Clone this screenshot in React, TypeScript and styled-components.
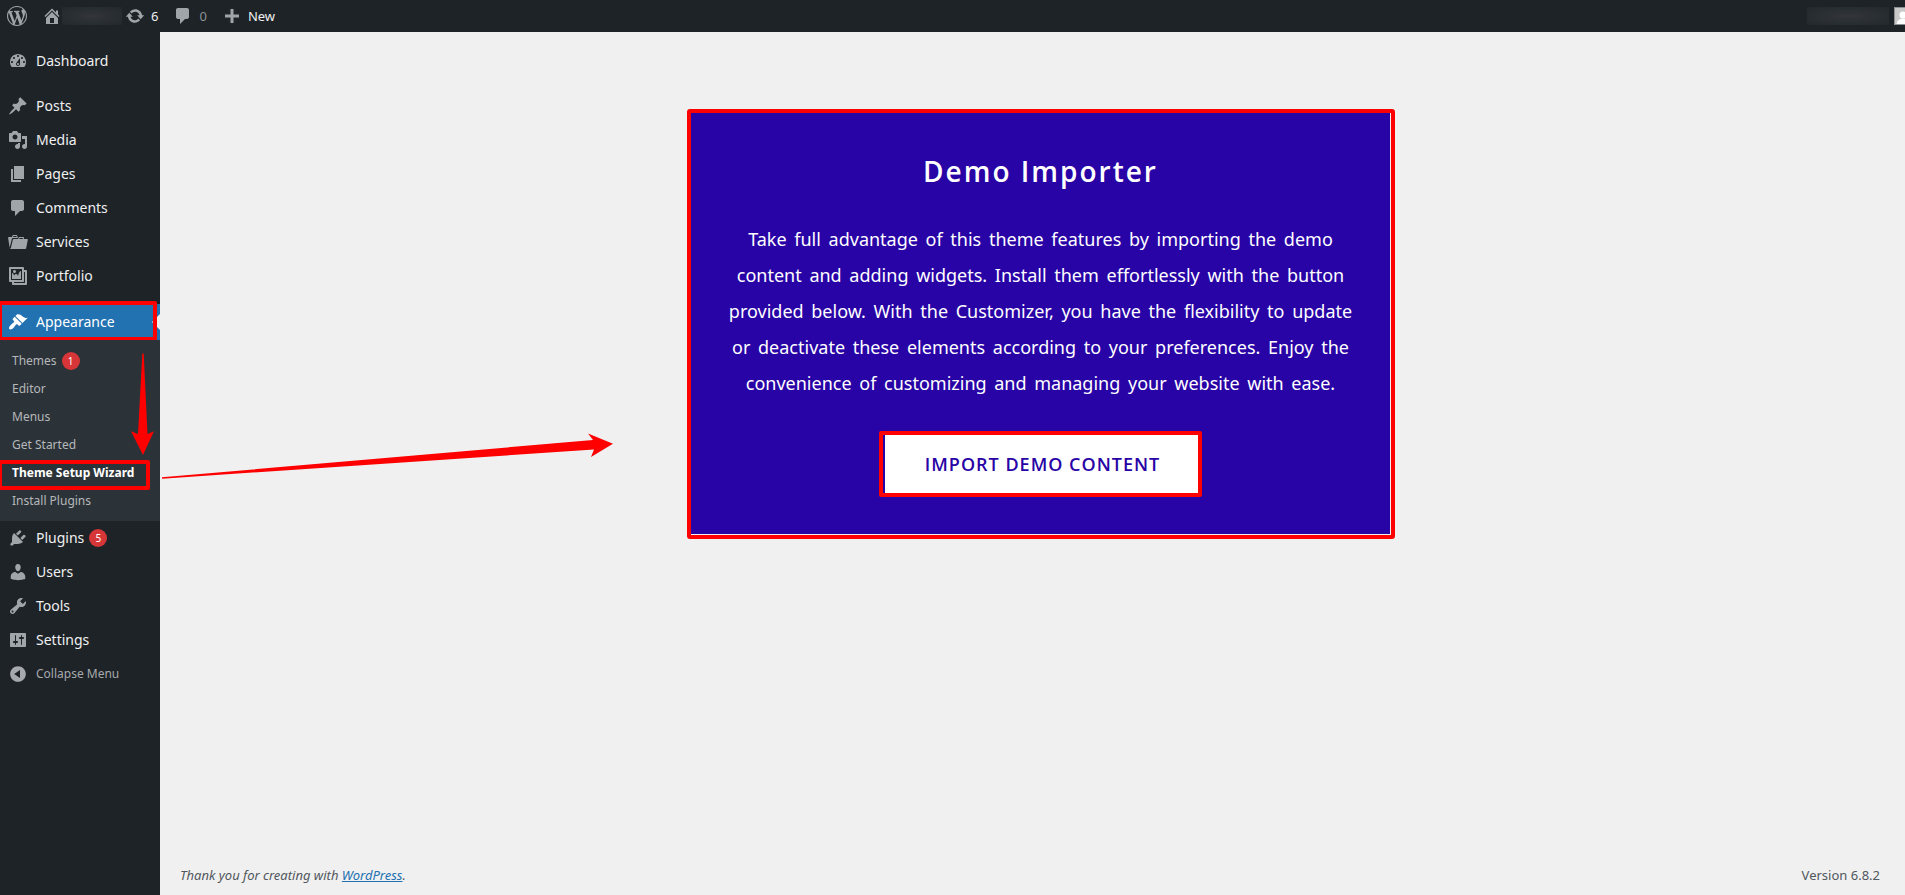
import React from "react";
import styled, { createGlobalStyle, css } from "styled-components";

const red = "#ff0000";
const canvas = "#f0f0f0";

const GlobalStyle = createGlobalStyle`
  * { box-sizing: border-box; }
  body {
    margin: 0;
    background: ${canvas};
    color: #50575e;
    font-family: "Noto Sans", sans-serif;
    font-size: 13px;
    line-height: 18px;
  }
  a { color: inherit; text-decoration: none; }
  button { font: inherit; }
  ul { list-style: none; margin: 0; padding: 0; }
`;

const Page = styled.div`
  min-height: 100vh;
  display: flex;
  flex-direction: column;
`;

const AdminBar = styled.header`
  height: 32px;
  display: flex;
  align-items: center;
  justify-content: space-between;
  background: #1d2327;
  color: #f0f0f1;
  overflow: hidden;
`;

const BarGroup = styled.nav`
  display: flex;
  align-items: center;
  gap: 15px;
  padding-left: 7px;
`;

const BarLink = styled.a<{ $dim?: boolean }>`
  display: flex;
  align-items: center;
  gap: 6px;
  color: ${(p) => (p.$dim ? "#8c9196" : "#f0f0f1")};
`;

const Redacted = styled.span<{ $width: number }>`
  width: ${(p) => p.$width}px;
  height: 18px;
  background: radial-gradient(ellipse at center, #323539 0%, #2a2f33 50%, #22282c 100%);
`;

const SiteLink = styled(BarLink)`
  gap: 0;
  margin-right: -12px;
`;

const Account = styled.a`
  display: flex;
  align-items: center;
  gap: 5px;
  margin-right: -7px;
`;

const Avatar = styled.svg`
  width: 18px;
  height: 18px;
  border: 1px solid #8c8f94;
  background: #c9c9c9;
`;

const Body = styled.div`
  flex: 1;
  display: flex;
`;

const Sidebar = styled.nav`
  width: 160px;
  flex: none;
  padding-top: 12px;
  background: #1d2327;
  color: #f0f0f1;
`;

const MenuItem = styled.li<{ $spaced?: boolean }>`
  position: relative;
  margin-top: ${(p) => (p.$spaced ? 11 : 0)}px;
`;

const highlight = css`
  content: "";
  position: absolute;
  left: -2px;
  border: 4px solid ${red};
  border-radius: 2px;
  pointer-events: none;
`;

const MenuLink = styled.a<{ $current?: boolean }>`
  position: relative;
  display: flex;
  align-items: center;
  gap: 8px;
  height: ${(p) => (p.$current ? 36 : 34)}px;
  padding-left: 8px;
  font-size: 14px;
  color: ${(p) => (p.$current ? "#fff" : "#f0f0f1")};
  background: ${(p) => (p.$current ? "#2271b1" : "transparent")};

  ${(p) =>
    p.$current &&
    css`
      &::before {
        content: "";
        position: absolute;
        right: 0;
        top: 10px;
        border: 8px solid transparent;
        border-right-color: ${canvas};
      }
      &::after {
        ${highlight}
        top: -3px;
        right: 3px;
        bottom: -1px;
      }
    `}
`;

const Collapse = styled.button`
  display: flex;
  align-items: center;
  gap: 8px;
  width: 100%;
  height: 34px;
  padding: 0 0 0 8px;
  border: 0;
  background: none;
  color: #a7aaad;
  font-size: 12px;
`;

const Submenu = styled.ul`
  position: relative;
  padding: 7px 0 6px;
  background: #2c3338;
`;

const SubLink = styled.a<{ $current?: boolean }>`
  position: relative;
  display: flex;
  align-items: center;
  height: 28px;
  padding-left: 12px;
  font-size: 12px;
  color: ${(p) => (p.$current ? "#fff" : "#b5b8bb")};
  font-weight: ${(p) => (p.$current ? 700 : 400)};

  ${(p) =>
    p.$current &&
    css`
      &::after {
        ${highlight}
        top: 1px;
        right: 10px;
        bottom: -3px;
      }
    `}
`;

const Badge = styled.span`
  width: 18px;
  height: 18px;
  margin-left: 5px;
  border-radius: 9px;
  background: #d63638;
  color: #fff;
  font-size: 10px;
  text-align: center;
`;

const Label = styled.span`
  display: flex;
  align-items: center;
`;

const DownArrow = styled.svg`
  position: absolute;
  left: 130px;
  top: 13px;
  width: 26px;
  height: 102px;
`;

const RightArrow = styled.svg`
  position: absolute;
  left: 162px;
  top: 92px;
  width: 451px;
  height: 48px;
`;

const Content = styled.div`
  flex: 1;
  display: flex;
  flex-direction: column;
  justify-content: space-between;
  padding-right: 5px;
`;

const Main = styled.main`
  display: flex;
  justify-content: center;
  padding: 77px 0 0 22px;
`;

const CardFrame = styled.section`
  width: 708px;
  max-width: 100%;
  padding: 0 1px 1px 0;
  border: 4px solid ${red};
  border-radius: 3px;
`;

const Card = styled.div`
  display: flex;
  flex-direction: column;
  align-items: center;
  padding: 38px 30px 37px;
  background: #2803a6;
  color: #fff;
  text-align: center;
`;

const Title = styled.h1`
  margin: 0;
  font-family: "Open Sans", "Noto Sans", sans-serif;
  font-size: 28px;
  font-weight: 600;
  line-height: 40px;
  letter-spacing: 2px;
`;

const Lead = styled.p`
  margin: 30px 0;
  font-size: 18px;
  line-height: 36px;
  word-spacing: 3px;
`;

const ButtonFrame = styled.div`
  padding-left: 2px;
  border: 4px solid ${red};
  border-radius: 2px;
`;

const ImportButton = styled.button`
  display: block;
  height: 58px;
  padding: 0 38px 0 40px;
  border: 0;
  background: #fff;
  color: #2803a6;
  font-family: "Open Sans", "Noto Sans", sans-serif;
  font-size: 18px;
  font-weight: 600;
  letter-spacing: 1px;
  text-transform: uppercase;
`;

const Footer = styled.footer`
  display: flex;
  justify-content: space-between;
  padding: 11px 20px;
  font-size: 13px;
`;

const FooterLink = styled.a`
  color: #2271b1;
  text-decoration: underline;
`;

const IconSvg = styled.svg<{ $color?: string }>`
  flex: none;
  width: 20px;
  height: 20px;
  fill: ${(p) => p.$color ?? "#a0a5aa"};
`;

const icons = {
  wordpress:
    "M20 10c0-5.51-4.49-10-10-10C4.48 0 0 4.49 0 10c0 5.52 4.48 10 10 10 5.51 0 10-4.48 10-10zM7.78 15.37L4.37 6.22c.55-.02 1.17-.08 1.17-.08.5-.06.44-1.13-.06-1.11 0 0-1.45.11-2.37.11-.18 0-.37 0-.58-.01C4.12 2.69 6.87 1.11 10 1.11c2.33 0 4.45.87 6.05 2.34-.68-.11-1.65.39-1.65 1.58 0 .74.45 1.36.9 2.1.35.61.55 1.36.55 2.46 0 1.49-1.4 5-1.4 5l-3.03-8.37c.54-.02.82-.17.82-.17.5-.05.44-1.25-.06-1.22 0 0-1.44.12-2.38.12-.87 0-2.33-.12-2.33-.12-.5-.03-.56 1.2-.06 1.22l.92.08 1.26 3.41zM17.41 10c.24-.64.74-1.87.43-4.25.7 1.29 1.05 2.71 1.05 4.25 0 3.29-1.73 6.24-4.4 7.78.97-2.59 1.94-5.2 2.92-7.78zM6.1 18.09C3.12 16.65 1.11 13.53 1.11 10c0-1.3.23-2.48.72-3.59C3.25 10.3 4.67 14.2 6.1 18.09zm4.03-6.63l2.58 6.98c-.86.29-1.76.45-2.71.45-.79 0-1.57-.11-2.29-.33.81-2.38 1.62-4.74 2.42-7.1z",
  home: "M16 8.5l1.53 1.53-1.06 1.06L10 4.6l-6.47 6.47-1.06-1.06L10 2.5l4 4v-2h2v4zm-6-2.46l6 5.99V18H4v-5.97zM12 17v-5H8v5h4z",
  update:
    "M10.2 3.28c3.53 0 6.43 2.61 6.92 6h2.08l-3.5 4-3.5-4h2.32c-.45-1.97-2.21-3.45-4.32-3.45-1.45 0-2.73.71-3.54 1.78L4.95 5.66C6.23 4.2 8.11 3.28 10.2 3.28zm-.4 13.44c-3.52 0-6.43-2.61-6.92-6H.8l3.5-4c1.17 1.33 2.33 2.67 3.5 4H5.48c.45 1.97 2.21 3.45 4.32 3.45 1.45 0 2.73-.71 3.54-1.78l1.71 1.95c-1.28 1.46-3.15 2.38-5.25 2.38z",
  plus: "M17 8.5v3h-5.5v5.5h-3v-5.5H3v-3h5.5V3h3v5.5H17z",
  dashboard:
    "M3.76 16h12.48c1.1-1.37 1.76-3.11 1.76-5 0-4.42-3.58-8-8-8s-8 3.58-8 8c0 1.89.66 3.63 1.76 5zM10 4c.55 0 1 .45 1 1s-.45 1-1 1-1-.45-1-1 .45-1 1-1zM6 6c.55 0 1 .45 1 1s-.45 1-1 1-1-.45-1-1 .45-1 1-1zm8 0c.55 0 1 .45 1 1s-.45 1-1 1-1-.45-1-1 .45-1 1-1zm-5.37 5.55L12 7v6c0 1.1-.9 2-2 2s-2-.9-2-2c0-.57.24-1.08.63-1.45zM4 10c.55 0 1 .45 1 1s-.45 1-1 1-1-.45-1-1 .45-1 1-1zm12 0c.55 0 1 .45 1 1s-.45 1-1 1-1-.45-1-1 .45-1 1-1zm-5 3c0-.55-.45-1-1-1s-1 .45-1 1 .45 1 1 1 1-.45 1-1z",
  post: "M10.44 3.02l1.82-1.82 6.36 6.35-1.83 1.82c-1.05-.68-2.48-.57-3.41.36l-.75.75c-.92.93-1.04 2.35-.35 3.41l-1.83 1.82-2.41-2.41-2.8 2.79c-.42.42-3.38 2.71-3.8 2.29s1.86-3.39 2.28-3.81l2.79-2.79L4.1 9.36l1.83-1.82c1.05.69 2.48.57 3.4-.36l.75-.75c.93-.92 1.05-2.35.36-3.41z",
  media:
    "M13 11V4c0-.55-.45-1-1-1h-1.67L9 1H5L3.67 3H2c-.55 0-1 .45-1 1v7c0 .55.45 1 1 1h10c.55 0 1-.45 1-1zM7 4.5c1.38 0 2.5 1.12 2.5 2.5S8.38 9.5 7 9.5 4.5 8.38 4.5 7 5.62 4.5 7 4.5zM14 6h5v10.5c0 1.38-1.12 2.5-2.5 2.5S14 17.88 14 16.5s1.12-2.5 2.5-2.5c.17 0 .34.02.5.05V9h-3V6zm-4 8.05V13h2v3.5c0 1.38-1.12 2.5-2.5 2.5S7 17.88 7 16.5 8.12 14 9.5 14c.17 0 .34.02.5.05z",
  page: "M6 15V2h10v13H6zm-1 1h8v2H3V5h2v11z",
  comments:
    "M5 2h9c1.1 0 2 .9 2 2v7c0 1.1-.9 2-2 2h-2l-5 5v-5H5c-1.1 0-2-.9-2-2V4c0-1.1.9-2 2-2z",
  folder:
    "M4 5H.78c-.37 0-.74.32-.69.84l1.56 9.99S3.5 8.47 3.86 6.7c.11-.53.61-.7.98-.7H10s-.7-2.08-.77-2.31C9.11 3.25 8.89 3 8.45 3H5.14c-.36 0-.7.23-.8.64C4.25 4.04 4 5 4 5zm4.88 0h-4s.42-1 .87-1h2.13c.48 0 1 1 1 1zM2.67 16.25c-.31.47-.76.75-1.26.75h15.73c.54 0 .92-.31 1.03-.83.44-2.19 1.68-8.44 1.68-8.44.07-.5-.3-.73-.62-.73H16V5.53c0-.16-.26-.53-.66-.53h-3.76c-.52 0-.87.58-.87.58L10 7H5.59c-.32 0-.63.19-.69.5 0 0-1.59 6.7-1.72 7.33-.07.37-.22.99-.51 1.42zM15.38 7H11s.58-1 1.13-1h2.29c.71 0 .96 1 .96 1z",
  gallery:
    "M16 4h1.96c.57 0 1.04.47 1.04 1.04v12.92c0 .57-.47 1.04-1.04 1.04H5.04C4.47 19 4 18.53 4 17.96V16H2.04C1.47 16 1 15.53 1 14.96V2.04C1 1.47 1.47 1 2.04 1h12.92c.57 0 1.04.47 1.04 1.04V4zM3 14h11V3H3v11zm5-8.5C8 4.67 7.33 4 6.5 4S5 4.67 5 5.5 5.67 7 6.5 7 8 6.33 8 5.5zm2 4.5s1-5 3-5v8H4V7c2 0 2 3 2 3s.33-2 2-2 2 2 2 2zm7 7V6h-1v8.96c0 .57-.47 1.04-1.04 1.04H6v1h11z",
  appearance:
    "M14.48 11.06L7.41 3.99l1.5-1.5c.5-.56 2.3-.47 3.51.32 1.21.8 1.43 1.28 2.91 2.1 1.18.64 2.45 1.26 4.45.85zm-.71.71L6.7 4.7 4.93 6.47c-.39.39-.39 1.02 0 1.41l1.06 1.06c.39.39.39 1.03 0 1.42-.6.6-1.43 1.11-2.21 1.69-.35.26-.7.53-1.01.84C1.43 14.23.4 16.08 1.4 17.07c.99 1 2.84-.03 4.18-1.36.31-.31.58-.66.85-1.02.57-.78 1.08-1.61 1.69-2.21.39-.39 1.02-.39 1.41 0l1.06 1.06c.39.39 1.02.39 1.41 0z",
  plugins:
    "M13.11 4.36L9.87 7.6 8 5.73l3.24-3.24c.35-.34 1.05-.2 1.56.32.52.51.66 1.21.31 1.55zm-8 1.77l.91-1.12 9.01 9.01-1.19.84c-.71.71-2.63 1.16-3.82 1.16H6.14L4.9 17.26c-.59.59-1.54.59-2.12 0-.59-.58-.59-1.53 0-2.12l1.24-1.24v-3.88c0-1.13.4-3.19 1.09-3.89zm7.26 3.97l3.24-3.24c.34-.35 1.04-.21 1.55.31.52.51.66 1.21.31 1.55l-3.24 3.25z",
  users:
    "M10 9.25c-2.27 0-2.73-3.44-2.73-3.44C7 4.02 7.82 2 9.97 2c2.16 0 2.98 2.02 2.71 3.81 0 0-.41 3.44-2.68 3.44zm0 2.57L12.72 10c2.39 0 4.52 2.33 4.52 4.53v2.49s-3.65 1.13-7.24 1.13c-3.65 0-7.24-1.13-7.24-1.13v-2.49c0-2.25 1.94-4.48 4.47-4.48z",
  tools:
    "M16.68 9.77c-1.34 1.34-3.3 1.67-4.95.99l-5.41 6.52c-.99.99-2.59.99-3.58 0s-.99-2.59 0-3.57l6.52-5.42c-.68-1.65-.35-3.61.99-4.95 1.28-1.28 3.12-1.62 4.72-1.06l-2.89 2.89 2.82 2.82 2.86-2.87c.53 1.58.18 3.39-1.08 4.65zM3.81 16.21c.4.39 1.04.39 1.43 0 .4-.4.4-1.04 0-1.43-.39-.4-1.03-.4-1.43 0-.39.39-.39 1.03 0 1.43z",
  settings:
    "M18 16V4c0-.55-.45-1-1-1H3c-.55 0-1 .45-1 1v12c0 .55.45 1 1 1h14c.55 0 1-.45 1-1zM8 11h1c.55 0 1 .45 1 1s-.45 1-1 1H8v1.5c0 .28-.22.5-.5.5s-.5-.22-.5-.5V13H6c-.55 0-1-.45-1-1s.45-1 1-1h1V5.5c0-.28.22-.5.5-.5s.5.22.5.5V11zm5-2h-1c-.55 0-1-.45-1-1s.45-1 1-1h1V5.5c0-.28.22-.5.5-.5s.5.22.5.5V7h1c.55 0 1 .45 1 1s-.45 1-1 1h-1v5.5c0 .28-.22.5-.5.5s-.5-.22-.5-.5V9z",
  collapse:
    "M10 2.16c4.33 0 7.84 3.51 7.84 7.84s-3.51 7.84-7.84 7.84S2.16 14.33 2.16 10 5.71 2.16 10 2.16zm2 11.72V6.12L6.18 9.97z",
};

type IconName = keyof typeof icons;

const Icon = ({ name, color }: { name: IconName; color?: string }) => (
  <IconSvg viewBox="0 0 20 20" $color={color} aria-hidden="true">
    <path d={icons[name]} />
  </IconSvg>
);

type Entry = {
  label: string;
  icon: IconName;
  spaced?: boolean;
  current?: boolean;
  badge?: number;
};

const menu: Entry[] = [
  { label: "Dashboard", icon: "dashboard" },
  { label: "Posts", icon: "post", spaced: true },
  { label: "Media", icon: "media" },
  { label: "Pages", icon: "page" },
  { label: "Comments", icon: "comments" },
  { label: "Services", icon: "folder" },
  { label: "Portfolio", icon: "gallery" },
  { label: "Appearance", icon: "appearance", spaced: true, current: true },
  { label: "Plugins", icon: "plugins", badge: 5 },
  { label: "Users", icon: "users" },
  { label: "Tools", icon: "tools" },
  { label: "Settings", icon: "settings" },
];

const submenu: { label: string; badge?: number; current?: boolean }[] = [
  { label: "Themes", badge: 1 },
  { label: "Editor" },
  { label: "Menus" },
  { label: "Get Started" },
  { label: "Theme Setup Wizard", current: true },
  { label: "Install Plugins" },
];

const AppearanceMenu = () => (
  <Submenu>
    {submenu.map((s) => (
      <li key={s.label}>
        <SubLink href="#" $current={s.current}>
          {s.label}
          {s.badge && <Badge>{s.badge}</Badge>}
        </SubLink>
      </li>
    ))}
    <li aria-hidden="true">
      <DownArrow viewBox="0 0 26 102">
        <path fill={red} d="M12.3.5h1.4L17.5 81 24 78.3 13 102 1 78.3 8 81z" />
      </DownArrow>
      <RightArrow viewBox="0 0 451 48">
        <path fill={red} d="M0 45.3L431 8l-5-6.5 25 10.2L429 25l3-7.5L0 46.7z" />
      </RightArrow>
    </li>
  </Submenu>
);

export default function App() {
  return (
    <Page>
      <GlobalStyle />
      <AdminBar>
        <BarGroup aria-label="Toolbar">
          <BarLink href="#" aria-label="About WordPress">
            <Icon name="wordpress" />
          </BarLink>
          <SiteLink href="#" aria-label="Visit site">
            <Icon name="home" />
            <Redacted $width={60} />
          </SiteLink>
          <BarLink href="#">
            <Icon name="update" />6
          </BarLink>
          <BarLink href="#" $dim>
            <Icon name="comments" />0
          </BarLink>
          <BarLink href="#">
            <Icon name="plus" />
            New
          </BarLink>
        </BarGroup>
        <Account href="#" aria-label="My account">
          <Redacted $width={82} />
          <Avatar viewBox="0 0 18 18">
            <circle cx="9" cy="8" r="4" fill="#fff" />
            <path d="M2 18c0-4 3-6 7-6s7 2 7 6z" fill="#fff" />
          </Avatar>
        </Account>
      </AdminBar>
      <Body>
        <Sidebar aria-label="Main menu">
          <ul>
            {menu.map((m) => (
              <MenuItem key={m.label} $spaced={m.spaced}>
                <MenuLink href="#" $current={m.current}>
                  <Icon name={m.icon} color={m.current ? "#fff" : undefined} />
                  <Label>
                    {m.label}
                    {m.badge && <Badge>{m.badge}</Badge>}
                  </Label>
                </MenuLink>
                {m.current && <AppearanceMenu />}
              </MenuItem>
            ))}
            <li>
              <Collapse type="button">
                <Icon name="collapse" color="#a7aaad" />
                Collapse Menu
              </Collapse>
            </li>
          </ul>
        </Sidebar>
        <Content>
          <Main>
            <CardFrame>
              <Card>
                <Title>Demo Importer</Title>
                <Lead>
                  Take full advantage of this theme features by importing the
                  demo content and adding widgets. Install them effortlessly
                  with the button provided below. With the Customizer, you have
                  the flexibility to update or deactivate these elements
                  according to your preferences. Enjoy the convenience of
                  customizing and managing your website with ease.
                </Lead>
                <ButtonFrame>
                  <ImportButton type="button">Import Demo Content</ImportButton>
                </ButtonFrame>
              </Card>
            </CardFrame>
          </Main>
          <Footer>
            <em>
              Thank you for creating with{" "}
              <FooterLink href="#">WordPress</FooterLink>.
            </em>
            <span>Version 6.8.2</span>
          </Footer>
        </Content>
      </Body>
    </Page>
  );
}
